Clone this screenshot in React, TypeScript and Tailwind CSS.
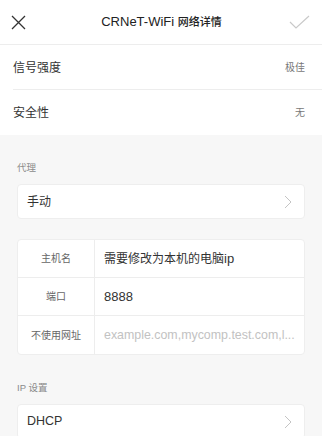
import React from 'react';

const font = { fontFamily: '"Liberation Sans", "Noto Sans CJK SC", sans-serif' };

function Chevron() {
  return (
    <svg width="8" height="14" viewBox="0 0 8 14" fill="none" aria-hidden="true">
      <path d="M1 1l6 6-6 6" stroke="#c4c4c4" strokeWidth="1" />
    </svg>
  );
}

function InfoRow({ label, value, divider }: { label: string; value: string; divider?: boolean }) {
  return (
    <div className="flex h-[45px] items-center justify-between pl-[13px] pr-[17px] relative">
      <span className="text-[12px] text-[#333]">{label}</span>
      <span className="text-[10px] text-[#777]">{value}</span>
      {divider && <div className="absolute bottom-0 left-[13px] right-0 h-px bg-[#ededed]" />}
    </div>
  );
}

function ProxyRow({
  label,
  children,
  last,
}: {
  label: string;
  children: React.ReactNode;
  last?: boolean;
}) {
  return (
    <div className={`flex h-[38px] ${last ? '' : 'border-b border-[#ededed]'}`}>
      <div className="w-[77px] shrink-0 flex items-center justify-center border-r border-[#ededed] text-[10px] text-[#666]">
        {label}
      </div>
      <div className="flex-1 min-w-0 flex items-center pl-[9px] whitespace-nowrap overflow-hidden">{children}</div>
    </div>
  );
}

export default function App() {
  return (
    <div className="w-[322px] h-[436px] overflow-hidden bg-[#f7f7f7]" style={font}>
      {/* Header */}
      <div className="h-[45px] bg-white border-b border-[#ededed] flex items-center justify-between px-[11px]">
        <svg width="15" height="15" viewBox="0 0 15 15" aria-hidden="true">
          <path d="M1 1l13 13M14 1L1 14" stroke="#333" strokeWidth="1.3" />
        </svg>
        <span className="text-[13px] text-[#222] font-medium ml-[8px]">
          CRNeT-WiFi <span className="text-[11px]">网络详情</span>
        </span>
        <svg width="21" height="14" viewBox="0 0 21 14" fill="none" aria-hidden="true" className="mr-[1px]">
          <path d="M1 7l6 6L20 1" stroke="#c9c9c9" strokeWidth="1.2" />
        </svg>
      </div>

      <div className="bg-white">
        <InfoRow label="信号强度" value="极佳" divider />
        <InfoRow label="安全性" value="无" />
      </div>

      <div className="px-[17px] pt-[27px]">
        <div className="text-[9.5px] text-[#8a8a8a] leading-[12px]">代理</div>
        <div className="mt-[10px] h-[35px] bg-white rounded-[4px] border border-[#eeeeee] flex items-center justify-between pl-[9px] pr-[12px]">
          <span className="text-[12px] text-[#333]">手动</span>
          <Chevron />
        </div>

        <div className="mt-[20px] bg-white rounded-[4px] border border-[#eeeeee] overflow-hidden">
          <ProxyRow label="主机名">
            <span className="text-[12px] text-[#333]">
              需要修改为本机的电脑<span className="text-[13px]">ip</span>
            </span>
          </ProxyRow>
          <ProxyRow label="端口">
            <span className="text-[13px] text-[#333]">8888</span>
          </ProxyRow>
          <ProxyRow label="不使用网址" last>
            <span className="text-[12.4px] text-[#c2c2c2]">example.com,mycomp.test.com,l...</span>
          </ProxyRow>
        </div>

        <div className="mt-[27px] text-[9.5px] text-[#8a8a8a] leading-[12px]">IP 设置</div>
        <div className="mt-[10px] h-[35px] bg-white rounded-[4px] border border-[#eeeeee] flex items-center justify-between pl-[9px] pr-[12px]">
          <span className="text-[12.5px] text-[#333]">DHCP</span>
          <Chevron />
        </div>
      </div>
    </div>
  );
}
